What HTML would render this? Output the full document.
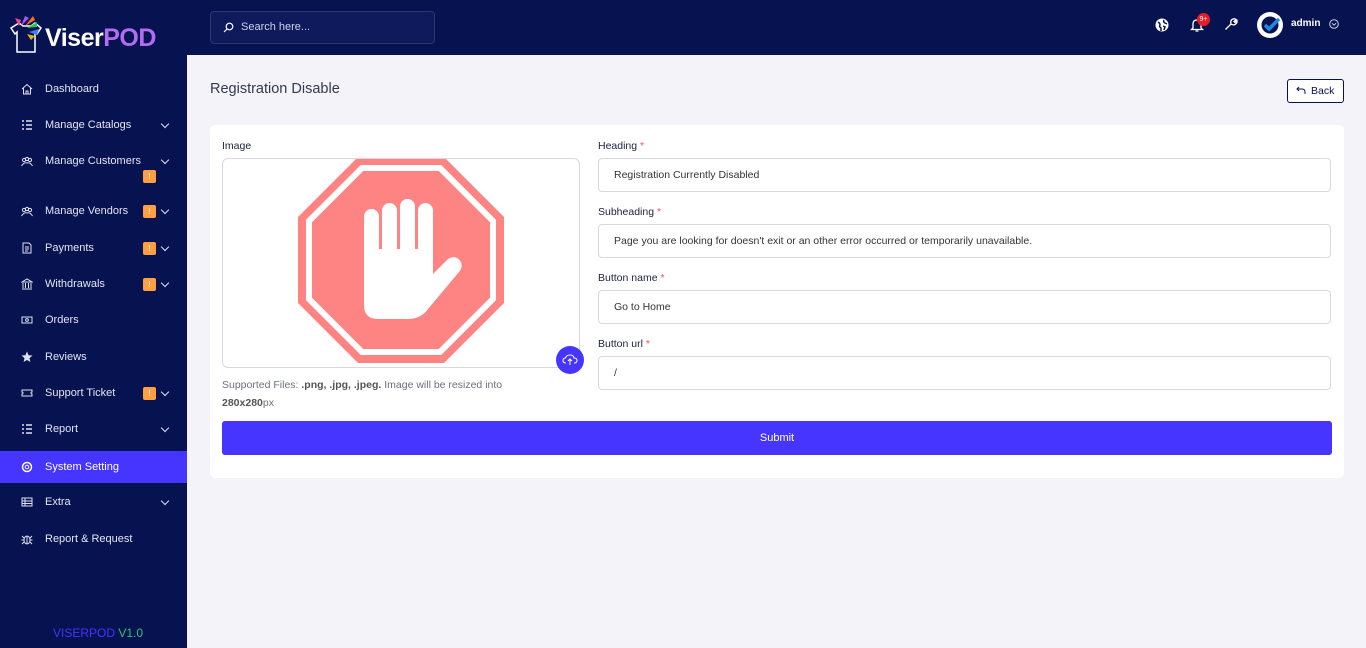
<!DOCTYPE html>
<html><head><meta charset="utf-8"><style>
*{box-sizing:border-box;margin:0;padding:0}
body{width:1366px;height:648px;overflow:hidden;background:#f3f3f9;font-family:"Liberation Sans",sans-serif;position:relative}
.sb{position:absolute;left:0;top:0;width:187px;height:648px;background:#071251}
.top{position:absolute;left:187px;top:0;width:1179px;height:55px;background:#071251}
.item{position:absolute;left:0;width:187px;height:32px;color:#e4e6f0;font-size:11px;display:flex;align-items:center;padding-left:45px}
.item .ic{position:absolute;left:21px;top:10px;width:12px;height:12px}
.item .ch{position:absolute;left:162px;top:12px;width:6px;height:6px;border-right:1.5px solid #dfe2ee;border-bottom:1.5px solid #dfe2ee;transform:rotate(45deg)}
.badge{position:absolute;width:13px;height:13px;background:#ff9f43;border-radius:2px;color:#fff;font-size:8px;text-align:center;line-height:13px}
.lbl{position:absolute;font-size:10.5px;color:#1c2140}
.lbl b{color:#ea5455;font-weight:normal}
.inp{position:absolute;left:598px;width:733px;height:34px;border:1px solid #d6d9e0;border-radius:4px;background:#fff;font-size:10.5px;color:#333;padding-left:15px;line-height:32px}
</style></head><body>
<div class="sb">
  <svg style="position:absolute;left:7px;top:14px" width="40" height="40" viewBox="0 0 40 40">
    <path d="M4 14 L12 9 L16 12 L24 12 L28 9 L34 14 L30 20 L28 18 L28 38 L10 38 L10 18 L8 20 Z" fill="none" stroke="#fff" stroke-width="1.5"/>
    <path d="M14 12 L18 2 L22 4 Z" fill="#a855f7"/><path d="M18 12 L26 2 L28 6 Z" fill="#f97316"/>
    <path d="M20 14 L30 8 L30 13 Z" fill="#22c55e"/><path d="M22 18 L32 15 L30 21 Z" fill="#3b82f6"/>
    <path d="M12 12 L8 4 L14 6 Z" fill="#ec4899"/><path d="M20 20 L28 22 L24 26 Z" fill="#eab308"/>
  </svg>
  <div style="position:absolute;left:45px;top:24px;font-size:25px;font-weight:bold;color:#fff;letter-spacing:-0.5px">Viser<span style="color:#b16cf0">POD</span></div>

  <div class="item" style="top:73px"><svg class="ic" viewBox="0 0 12 12"><path d="M1 6 L6 1.5 L11 6 M2.5 5 V11 H9.5 V5 M5 11 V8 H7 V11" fill="none" stroke="#dfe2ee" stroke-width="1"/></svg>Dashboard</div>
  <div class="item" style="top:109px"><svg class="ic" viewBox="0 0 12 12"><path d="M1 2h2M5 2h6M1 6h2M5 6h6M1 10h2M5 10h6" stroke="#dfe2ee" stroke-width="1.4"/></svg>Manage Catalogs<span class="ch"></span></div>
  <div class="item" style="top:145px"><svg class="ic" viewBox="0 0 12 12"><circle cx="3" cy="5" r="1.6" fill="none" stroke="#dfe2ee"/><circle cx="9" cy="5" r="1.6" fill="none" stroke="#dfe2ee"/><circle cx="6" cy="4" r="1.6" fill="none" stroke="#dfe2ee"/><path d="M0.5 11 Q3 7 6 8 Q9 7 11.5 11" fill="none" stroke="#dfe2ee"/></svg>Manage Customers<span class="ch"></span></div>
  <div class="badge" style="left:143px;top:170px">!</div>
  <div class="item" style="top:195px"><svg class="ic" viewBox="0 0 12 12"><circle cx="3" cy="5" r="1.6" fill="none" stroke="#dfe2ee"/><circle cx="9" cy="5" r="1.6" fill="none" stroke="#dfe2ee"/><circle cx="6" cy="4" r="1.6" fill="none" stroke="#dfe2ee"/><path d="M0.5 11 Q3 7 6 8 Q9 7 11.5 11" fill="none" stroke="#dfe2ee"/></svg>Manage Vendors<span class="ch"></span></div>
  <div class="badge" style="left:143px;top:205px">!</div>
  <div class="item" style="top:232px"><svg class="ic" viewBox="0 0 12 12"><path d="M2 1h6l2 2v8H2z M4 5h4M4 7h4M4 9h3" fill="none" stroke="#dfe2ee"/></svg>Payments<span class="ch"></span></div>
  <div class="badge" style="left:143px;top:242px">!</div>
  <div class="item" style="top:268px"><svg class="ic" viewBox="0 0 12 12"><path d="M1 4 L6 1 L11 4 Z M2 5v5M4.5 5v5M7.5 5v5M10 5v5M1 11h10" fill="none" stroke="#dfe2ee"/></svg>Withdrawals<span class="ch"></span></div>
  <div class="badge" style="left:143px;top:278px">!</div>
  <div class="item" style="top:304px"><svg class="ic" viewBox="0 0 12 12"><rect x="1" y="3" width="10" height="6" fill="none" stroke="#dfe2ee"/><circle cx="6" cy="6" r="1.4" fill="none" stroke="#dfe2ee"/></svg>Orders</div>
  <div class="item" style="top:341px"><svg class="ic" viewBox="0 0 12 12"><path d="M6 0.5 L7.6 4.2 L11.5 4.5 L8.5 7.1 L9.4 11 L6 9 L2.6 11 L3.5 7.1 L0.5 4.5 L4.4 4.2 Z" fill="#dfe2ee"/></svg>Reviews</div>
  <div class="item" style="top:377px"><svg class="ic" viewBox="0 0 12 12"><path d="M1 3h10v2a1 1 0 0 0 0 2v2H1V7a1 1 0 0 0 0-2z" fill="none" stroke="#dfe2ee"/></svg>Support Ticket<span class="ch"></span></div>
  <div class="badge" style="left:143px;top:387px">!</div>
  <div class="item" style="top:413px"><svg class="ic" viewBox="0 0 12 12"><path d="M1 2h2M5 2h6M1 6h2M5 6h6M1 10h2M5 10h6" stroke="#dfe2ee" stroke-width="1.4"/></svg>Report<span class="ch"></span></div>
  <div class="item" style="top:451px;background:#4634ff;color:#fff"><svg class="ic" viewBox="0 0 12 12"><circle cx="6" cy="6" r="4.5" fill="none" stroke="#fff" stroke-width="1.5"/><circle cx="6" cy="6" r="1.8" fill="none" stroke="#fff"/></svg>System Setting</div>
  <div class="item" style="top:486px"><svg class="ic" viewBox="0 0 12 12"><rect x="1" y="2" width="10" height="8" fill="none" stroke="#dfe2ee"/><path d="M1 5h10M1 7.5h10M4 2v8" stroke="#dfe2ee"/></svg>Extra<span class="ch"></span></div>
  <div class="item" style="top:523px"><svg class="ic" viewBox="0 0 12 12"><ellipse cx="6" cy="7" rx="3" ry="4" fill="none" stroke="#dfe2ee"/><path d="M6 3v8M0.5 7h2.5M9 7h2.5M1 3l2 2M11 3l-2 2M1 11l2-2M11 11l-2-2" stroke="#dfe2ee"/></svg>Report &amp; Request</div>
  <div style="position:absolute;left:53px;top:626px;font-size:12px;color:#4634ff">VISERPOD <span style="color:#28c76f">V1.0</span></div>
</div>

<div class="top">
  <div style="position:absolute;left:23px;top:11px;width:225px;height:33px;border:1px solid #2d3675;border-radius:4px;background:#0f1a5c;color:#cfd3e6;font-size:11px;line-height:31px;padding-left:30px">Search here...
    <svg style="position:absolute;left:12px;top:10px" width="11" height="11" viewBox="0 0 11 11"><circle cx="6.5" cy="4.5" r="3.3" fill="none" stroke="#fff" stroke-width="1.2"/><path d="M4 7 L1 10" stroke="#fff" stroke-width="1.2"/></svg></div>
  <svg style="position:absolute;left:968px;top:18px" width="14" height="14" viewBox="0 0 14 14"><circle cx="7" cy="7" r="6.5" fill="#fff"/><path d="M3 4 Q5 5 5 7 Q4 9 6 10 L6 13 M9 2 Q8 4 10 5 L12 6 M8 8 L10 9 L9 12" fill="none" stroke="#071251" stroke-width="1.5"/></svg>
  <svg style="position:absolute;left:1003px;top:17px" width="14" height="16" viewBox="0 0 14 16"><path d="M3 11 V7 Q3 3 7 3 Q11 3 11 7 V11 L12.5 12.5 H1.5 Z M5.5 14 H8.5" fill="none" stroke="#fff" stroke-width="1.3"/></svg>
  <div style="position:absolute;left:1010px;top:13px;width:13px;height:13px;border-radius:50%;background:#ea1b25;color:#fff;font-size:7px;text-align:center;line-height:13px">9+</div>
  <svg style="position:absolute;left:1037px;top:17px" width="14" height="14" viewBox="0 0 14 14"><path d="M2 12 L7 7 M7 7 Q6 3 9 2 Q11 1.5 12 2.5 L10 4.5 L11 5.5 L13 3.5 Q13.5 6 11 7.5 Q9 8.5 7 7 M1.5 12.5 L2.5 11.5" fill="none" stroke="#fff" stroke-width="1.3"/></svg>
  <div style="position:absolute;left:1070px;top:12px;width:26px;height:26px;border-radius:50%;background:#fff"><svg width="26" height="26" viewBox="0 0 26 26"><circle cx="13" cy="13" r="8.5" fill="#071251"/><path d="M8 13 L12 17 L22 7" fill="none" stroke="#1e88e5" stroke-width="3.5"/></svg></div>
  <div style="position:absolute;left:1104px;top:18px;color:#fff;font-size:10px;font-weight:bold">admin</div>
  <svg style="position:absolute;left:1142px;top:19px" width="10" height="10" viewBox="0 0 10 10"><circle cx="5" cy="5" r="4.3" fill="none" stroke="#cfd3e6"/><path d="M3 4.3 L5 6.2 L7 4.3" fill="none" stroke="#cfd3e6"/></svg>
</div>

<div style="position:absolute;left:210px;top:81px;font-size:14.5px;color:#333a4d">Registration Disable</div>
<div style="position:absolute;left:1287px;top:79px;width:57px;height:24px;border:1px solid #071251;border-radius:3px;font-size:10.5px;color:#071251;line-height:22px;padding-left:23px;background:#fff">Back
  <svg style="position:absolute;left:8px;top:6px" width="10" height="9" viewBox="0 0 10 9"><path d="M3 1 L1 3 L3 5 M1 3 H6 Q9 3 9 6 V8" fill="none" stroke="#071251"/></svg></div>

<div style="position:absolute;left:210px;top:125px;width:1134px;height:353px;background:#fff;border-radius:5px"></div>
<div class="lbl" style="left:222px;top:140px">Image</div>
<div style="position:absolute;left:222px;top:158px;width:358px;height:210px;border:1px solid #d6d9e0;border-radius:6px;background:#fff;overflow:hidden">
  <svg style="position:absolute;left:0;top:0" width="358" height="210" viewBox="0 0 358 210">
    <polygon points="137,-6 223,-6 283,54 283,140 223,200 137,200 77,140 77,54" transform="translate(-2,4)" fill="#fe8383"/>
    <polygon points="141,5 219,5 272,58 272,136 219,189 141,189 88,136 88,58" transform="translate(-2,4)" fill="none" stroke="#fff" stroke-width="6"/>
    <g fill="#fff">
      <rect x="141" y="50" width="15" height="70" rx="7.5"/>
      <rect x="159" y="44" width="15" height="76" rx="7.5"/>
      <rect x="177" y="40" width="15" height="80" rx="7.5"/>
      <rect x="195" y="44" width="15" height="76" rx="7.5"/>
      <path d="M141 90 H210 V115 L225 100 Q233 95 238 103 Q240 108 236 113 L205 150 Q198 160 185 160 H155 Q141 160 141 146 Z"/>
    </g>
  </svg>
</div>
<div style="position:absolute;left:556px;top:346px;width:28px;height:28px;border-radius:50%;background:#4634ff"><svg width="28" height="28" viewBox="0 0 28 28"><path d="M10 17 Q7 17 7 14.5 Q7 12 9.5 12 Q10.5 9 14 9 Q17.5 9 18 12 Q21 12 21 14.5 Q21 17 18 17 M14 19 V13 M12 15 L14 13 L16 15" fill="none" stroke="#fff" stroke-width="1"/></svg></div>
<div style="position:absolute;left:222px;top:376px;width:330px;font-size:10.5px;color:#6c7080;line-height:18px">Supported Files: <b style="color:#555">.png, .jpg, .jpeg.</b> Image will be resized into <b style="color:#555">280x280</b>px</div>

<div class="lbl" style="left:598px;top:140px">Heading <b>*</b></div>
<div class="inp" style="top:158px">Registration Currently Disabled</div>
<div class="lbl" style="left:598px;top:206px">Subheading <b>*</b></div>
<div class="inp" style="top:224px">Page you are looking for doesn't exit or an other error occurred or temporarily unavailable.</div>
<div class="lbl" style="left:598px;top:272px">Button name <b>*</b></div>
<div class="inp" style="top:290px">Go to Home</div>
<div class="lbl" style="left:598px;top:338px">Button url <b>*</b></div>
<div class="inp" style="top:356px">/</div>

<div style="position:absolute;left:222px;top:421px;width:1110px;height:34px;background:#4634ff;border-radius:3px;color:#fff;font-size:11px;text-align:center;line-height:34px">Submit</div>
</body></html>
